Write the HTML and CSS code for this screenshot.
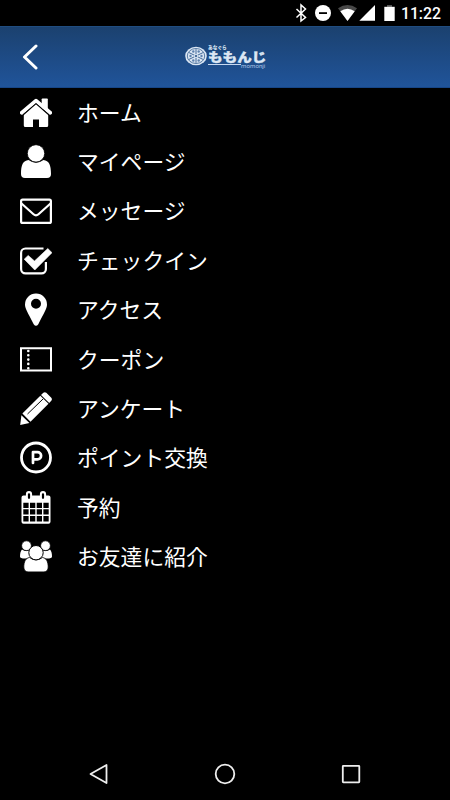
FILE: index.html
```html
<!DOCTYPE html>
<html lang="ja">
<head>
<meta charset="utf-8">
<title>ももんじ</title>
<link rel="stylesheet" href="styles.css">
</head>
<body>
<div class="status">
  <svg class="status-icons" viewBox="280 0 120 26">
    <path d="M296.500 9l9 8.500-4.500 3.500V5l4.500 4-9 8.500" fill="none" stroke="#fff" stroke-width="1.500"/>
    <circle cx="323" cy="13" r="8"/><path d="M319 12.200h8v1.800h-8z" fill="#000"/>
    <path d="M338 8.300Q347.500 1.500 357 8.300L347.500 21z" fill="#484848"/>
    <path d="M340.300 11.300Q347.500 6 354.700 11.300L347.500 21z"/>
    <path d="M359.300 20.800L375 5v15.800z"/>
    <path d="M387 5h5v2h-5z" fill="#555"/><path d="M384.300 6.800h10.400V21h-10.400z"/>
  </svg>
  <span class="clock">11:22</span>
</div>
<header class="header">
  <svg class="back" viewBox="0 0 16 26"><path d="M14 2L2.500 13 14 24" fill="none" stroke="#fff" stroke-width="3" stroke-linecap="round" stroke-linejoin="round"/></svg>
  <div class="logo">
    <svg class="crest" viewBox="-11 -10 22 20">
      <ellipse rx="10.800" ry="9.300" fill="#dce7f4"/>
      <ellipse rx="8.700" ry="7.500" fill="none" stroke="#1d4a80" stroke-width=".7"/>
      <path d="M0-6.800v13.600M-7-3.400l14 6.800M-7 3.400l14-6.800" stroke="#1d4a80" stroke-width=".8" fill="none"/>
      <g fill="#5e82ae"><circle cx="-5.500" r="1.200"/><circle cx="5.500" r="1.200"/><circle cx="-2.700" cy="-4.500" r="1.200"/><circle cx="2.700" cy="-4.500" r="1.200"/><circle cx="-2.700" cy="4.500" r="1.200"/><circle cx="2.700" cy="4.500" r="1.200"/></g>
      <circle r="2" fill="#dce7f4"/><circle r="1" fill="#1d4a80"/>
    </svg>
    <div class="wordmark">
      <span class="kicker">あなぐら</span>
      <span class="name">ももんじ</span>
      <span class="sub"><i class="rule"></i><span class="roman">momonji</span></span>
    </div>
  </div>
</header>
<nav class="menu">
  <a class="item"><svg class="icon" viewBox="-16 -18 32 36">
    <path d="M6.500-14.500h4.500q.8 0 .8.800v10H5.700v-10q0-.8.800-.8z"/>
    <path d="M-14.200-.200L0-12.300 14.200-.200" fill="none" stroke="#fff" stroke-width="3.800" stroke-linecap="round" stroke-linejoin="round"/>
    <path d="M0-9.300L12.200 1.300V12.500a1.500 1.500 0 0 1-1.500 1.500H3V6.500h-6V14h-7.700a1.500 1.500 0 0 1-1.500-1.500V1.300z"/>
    <path d="M-13 2L0-9.300 13 2" fill="none" stroke="#000" stroke-width="1.100"/>
  </svg><span>ホーム</span></a>
  <a class="item"><svg class="icon" viewBox="-16 -18 32 36">
    <path d="M-7.500-2Q0 3.500 7.500-2C13-1.500 15 3 15 12q0 4-4 4h-22q-4 0-4-4C-15 3-13-1.500-7.500-2z"/>
    <circle cy="-8.600" r="8.700" stroke="#000" stroke-width=".8"/>
  </svg><span>マイページ</span></a>
  <a class="item"><svg class="icon" viewBox="-16 -18 32 36">
    <g fill="none" stroke="#fff" stroke-width="2.200"><rect x="-14.900" y="-11.400" width="29.800" height="23.300" rx="1.500"/>
    <path d="M-14.500-7.500L-2.500 3.200Q0 5.500 2.500 3.200L14.500-7.500"/></g>
  </svg><span>メッセージ</span></a>
  <a class="item"><svg class="icon" viewBox="-16 -18 32 36">
    <path d="M7.500-12.500H-10.500a4.400 4.400 0 0 0-4.400 4.400V8a4.400 4.400 0 0 0 4.400 4.400H5.500A4.400 4.400 0 0 0 9.900 8V1" fill="none" stroke="#fff" stroke-width="2.200"/>
    <path d="M-11.800-1.800l4-3.800 6.300 5.600L11.800-12.500 16-8.300-1.200 9z" stroke="#fff" stroke-width=".6" stroke-linejoin="round"/>
  </svg><span>チェックイン</span></a>
  <a class="item"><svg class="icon" viewBox="-16 -18 32 36">
    <path fill-rule="evenodd" d="M0-16.500A10.900 10.900 0 0 1 11-5.500C11-1.500 8.500 2 2.300 14.200Q0 17.500-2.300 14.200C-8.500 2-11-1.500-11-5.500A10.900 10.900 0 0 1 0-16.500zM0-11.300a5 5 0 1 0 0 10 5 5 0 0 0 0-10z"/>
  </svg><span>アクセス</span></a>
  <a class="item"><svg class="icon" viewBox="-16 -18 32 36">
    <path d="M-15-11.700h30v22.200h-30z" fill="none" stroke="#fff" stroke-width="2"/>
    <path d="M-7.700-9V10" stroke="#fff" stroke-width="2.600" stroke-linecap="round" stroke-dasharray="0 4.300" fill="none"/>
  </svg><span>クーポン</span></a>
  <a class="item"><svg class="icon" viewBox="-16 -18 32 36">
    <path d="M7.300-16.200q1.500-1.200 3 0l5 5q1.200 1.500 0 3L13.200-6 5-14zM4.300-13.300L12.500-5.200-5.500 12.700-13.600 4.500zM-14.600 6.200l8 7.800L-15.800 16z"/>
    <path d="M-10 3.500L5.500-11.500" stroke="#000" stroke-width="1" fill="none" transform="translate(1.500 1.500)"/>
  </svg><span>アンケート</span></a>
  <a class="item"><svg class="icon" viewBox="-16 -18 32 36">
    <circle cy="-.5" r="14.500" fill="none" stroke="#fff" stroke-width="2.800"/>
    <path d="M-3 5v-10.900H1.500a3.600 3.600 0 0 1 0 7.200H-3" fill="none" stroke="#fff" stroke-width="2.700" stroke-linecap="round" stroke-linejoin="round"/>
  </svg><span>ポイント交換</span></a>
  <a class="item"><svg class="icon" viewBox="-16 -18 32 36">
    <path fill-rule="evenodd" d="M-12.500-12.500H12.500a2 2 0 0 1 2 2V13.700a2 2 0 0 1-2 2H-12.500a2 2 0 0 1-2-2V-10.500a2 2 0 0 1 2-2z
      M-12.700-5.300v5.300h5.300v-5.300zm6.700 0v5.300h5.300v-5.300zm6.700 0v5.300H6v-5.300zm6.700 0v5.300h5.300v-5.300z
      M-12.700 1.300v5.300h5.300V1.300zm6.700 0v5.300h5.300V1.300zm6.700 0v5.300H6V1.300zm6.700 0v5.300h5.300V1.300z
      M-12.700 7.900v5.600h5.300V7.900zm6.700 0v5.600h5.300V7.900zm6.700 0v5.600H6V7.900zm6.700 0v5.600h5.300V7.900z"/>
    <path d="M-7-14v4M7-14v4" fill="none" stroke="#fff" stroke-width="6.200" stroke-linecap="round"/>
    <path d="M-7-13.700v3.500M7-13.700v3.500" fill="none" stroke="#000" stroke-width="2.200" stroke-linecap="round"/>
  </svg><span>予約</span></a>
  <a class="item"><svg class="icon" viewBox="-16 -18 32 36">
    <path d="M-14-7.500q4.500 3 8 0L-3 1-11 1.500q-5 0-5-2 0-5 2-7zM14-7.500q-4.500 3-8 0L3 1l8 .5q5 0 5-2 0-5-2-7z"/>
    <circle cx="-9.500" cy="-11.300" r="4.900" stroke="#000" stroke-width=".8"/><circle cx="9.500" cy="-11.300" r="4.900" stroke="#000" stroke-width=".8"/>
    <path d="M-6.500 .5Q0 5.300 6.500 .5c4 .5 5.700 4.500 5.700 9.500 0 3-1.500 4.900-4.200 4.900H-8c-2.700 0-4.200-1.900-4.200-4.900 0-5 1.700-9 5.700-9.500z" stroke="#000" stroke-width=".8"/>
    <circle cy="-4.300" r="7.200" stroke="#000" stroke-width="1"/>
  </svg><span>お友達に紹介</span></a>
</nav>
<footer class="navbar">
  <svg viewBox="-12 -12 24 24"><path d="M-8.500 0L7.500-9V9z"/></svg>
  <svg viewBox="-12 -12 24 24"><circle r="9.300"/></svg>
  <svg viewBox="-12 -12 24 24"><rect x="-8.200" y="-8.200" width="16.500" height="16.500" rx=".5"/></svg>
</footer>
</body>
</html>
```

FILE: styles.css
```css
* { box-sizing: border-box; }
body {
  margin: 0;
  width: 450px;
  height: 800px;
  display: flex;
  flex-direction: column;
  background: #000;
  color: #fff;
  font-family: Roboto, "Noto Sans CJK JP", sans-serif;
  overflow: hidden;
}
svg { display: block; fill: #fff; flex: none; }
.status {
  height: 26px;
  display: flex;
  justify-content: flex-end;
  align-items: center;
  padding-right: 9px;
}
.status-icons { width: 120px; height: 26px; }
.clock {
  width: 41px;
  text-align: right;
  font-size: 15.8px;
  font-weight: 500;
  line-height: 26px;
  padding-top: 2px;
  white-space: nowrap;
}
.header {
  height: 62px;
  display: grid;
  grid-template-columns: 185px 1fr;
  align-items: center;
  background: linear-gradient(#1b416f, #20549a);
  border-top: 1px solid #204d80;
  border-bottom: 1px solid #174687;
}
.back { width: 16px; height: 26px; margin-left: 22px; }
.logo { display: flex; align-items: center; color: #dce7f4; height: 24px; }
.crest { width: 22px; height: 20px; margin-top: -2px; }
.wordmark {
  width: 60px;
  height: 24px;
  display: flex;
  flex-direction: column;
  margin-left: 1px;
  font-family: "Noto Sans CJK JP", sans-serif;
}
.kicker { font-size: 4.7px; line-height: 5px; font-weight: 900; }
.name {
  height: 13px;
  font-size: 14.600px;
  line-height: 13px;
  font-weight: 900;
  white-space: nowrap;
  -webkit-text-stroke: 0.5px #dce7f4;
  transform: scaleY(0.84);
}
.sub { display: flex; height: 6px; }
.rule { flex: none; width: 33px; height: 1px; background: #c6d8f0; margin-top: 1px; }
.roman { font: 6.200px/6px Roboto, sans-serif; color: #a9c2e2; margin-left: 0; }
.menu { flex: 1; }
.item {
  height: 49.4px;
  display: flex;
  align-items: center;
  gap: 25px;
  padding-left: 20px;
  font-size: 21.800px;
  font-family: "Noto Sans CJK JP", sans-serif;
  line-height: 32px;
  white-space: nowrap;
}
.item span { padding-bottom: 2px; }
.icon { width: 32px; height: 36px; }
.navbar {
  height: 52px;
  display: flex;
  justify-content: space-between;
  align-items: center;
  padding: 0 87px 0 87px;
}
.navbar svg { width: 24px; height: 24px; fill: none; stroke: #eee; stroke-width: 1.800; stroke-linejoin: round; }
```
